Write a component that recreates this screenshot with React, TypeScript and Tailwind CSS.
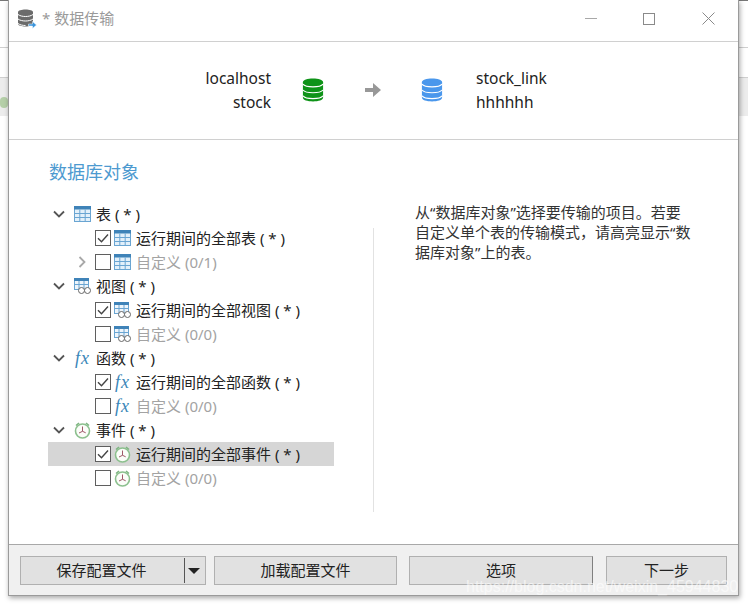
import type { ReactNode } from "react";

const font = "font-['Noto_Sans','Noto_Sans_CJK_SC',sans-serif]";

function Db({ color, className = "" }: { color: string; className?: string }) {
  return (
    <svg viewBox="0 0 24 26" className={className}>
      <path d="M1 4.500C1 2 6 .5 12 .5S23 2 23 4.500v17c0 2.500-5 4-11 4s-11-1.500-11-4z" fill={color} />
      <path d="M1 6.500c2 2.500 7 3 11 3s9-.5 11-3M1 13c2 2.500 7 3 11 3s9-.5 11-3M1 19.500c2 2.500 7 3 11 3s9-.5 11-3" fill="none" stroke="#fff" strokeWidth="1.300" />
    </svg>
  );
}

function TableIcon() {
  return (
    <svg viewBox="0 0 17 16" className="h-4 w-[17px] shrink-0">
      <rect x="0.500" y="0.500" width="16" height="15" fill="#e3f0fa" stroke="#6aa5d2" />
      <rect x="0" y="0" width="17" height="3.500" fill="#3f83b8" />
      <path d="M5.800 3.500v12M11.200 3.500v12M.5 7.500h16M.5 11.500h16" stroke="#6aa5d2" fill="none" />
    </svg>
  );
}

function ViewIcon() {
  return (
    <svg viewBox="0 0 17 16" className="h-4 w-[17px] shrink-0">
      <rect x="0.500" y="0.500" width="14" height="11" fill="#eef5fb" stroke="#6aa5d2" />
      <rect x="0" y="0" width="15" height="3" fill="#3f83b8" />
      <path d="M5 3v8M10 3v8M.5 6.500h14" stroke="#6aa5d2" fill="none" />
      <circle cx="7.500" cy="12.500" r="3" fill="#fff" stroke="#666" />
      <circle cx="13.500" cy="12.500" r="3" fill="#fff" stroke="#666" />
    </svg>
  );
}

function FxIcon() {
  return (
    <span className="flex h-4 w-[17px] shrink-0 items-center justify-center font-['Liberation_Serif',serif] text-[18px] italic leading-none tracking-[1px] text-[#3a86b8]">
      fx
    </span>
  );
}

function ClockIcon() {
  return (
    <svg viewBox="0 0 17 17" className="h-[17px] w-[17px] shrink-0">
      <circle cx="8.500" cy="9" r="7" fill="#fbfdf9" stroke="#8cc08e" strokeWidth="1.600" />
      <path d="M2 3.500 5 1M15 3.500 12 1" stroke="#7db580" strokeWidth="1.600" fill="none" />
      <path d="M8.500 4.500v4.800L5 11M8.500 9.300l3.200 1.500" stroke="#a0586a" fill="none" />
    </svg>
  );
}

function Chevron({ open, muted }: { open?: boolean; muted?: boolean }) {
  return (
    <svg viewBox="0 0 12 12" className="h-3 w-3">
      <path
        d={open ? "M1 3.500 6 8.500l5-5" : "M3.500 1 8.500 6l-5 5"}
        fill="none"
        stroke={muted ? "#a8a8a8" : "#555"}
        strokeWidth="1.800"
      />
    </svg>
  );
}

function Checkbox({ checked }: { checked?: boolean }) {
  return (
    <span className="flex h-4 w-4 shrink-0 items-center justify-center border border-[#5f5f5f] bg-white">
      {checked && (
        <svg viewBox="0 0 14 14" className="h-3.5 w-3.5">
          <path d="M2 7.200 5.500 10.800 12 3.500" fill="none" stroke="#444" strokeWidth="1.400" />
        </svg>
      )}
    </span>
  );
}

function GroupRow({ icon, label }: { icon: ReactNode; label: string }) {
  return (
    <div className="flex h-6 items-center pl-[5px] text-[#222]">
      <span className="mr-[9px] flex w-3"><Chevron open /></span>
      {icon}
      <span className="ml-[5px] whitespace-pre">{label} ( * )</span>
    </div>
  );
}

function ChildRow({
  icon,
  label,
  checked,
  selected,
  expander,
}: {
  icon: ReactNode;
  label: string;
  checked?: boolean;
  selected?: boolean;
  expander?: boolean;
}) {
  return (
    <div className={`flex h-6 w-[286px] items-center pl-[28px] ${selected ? "bg-[#d6d6d6]" : ""}`}>
      <span className="mr-[7px] flex w-3">{expander && <Chevron muted />}</span>
      <Checkbox checked={checked} />
      <span className="ml-[3px] flex">{icon}</span>
      <span className={`ml-[5px] whitespace-pre ${checked ? "text-[#222]" : "text-[#a3a3a3]"}`}>{label}</span>
    </div>
  );
}

function FootButton({ className, children }: { className: string; children: ReactNode }) {
  return (
    <div className={`flex h-[29px] items-center justify-center border border-[#b0b0b0] bg-[#e1e1e1] text-[15px] text-[#222] ${className}`}>
      {children}
    </div>
  );
}

const groups = [
  { name: "表", Icon: TableIcon, all: "运行期间的全部表 ( * )", custom: "自定义 (0/1)", expander: true },
  { name: "视图", Icon: ViewIcon, all: "运行期间的全部视图 ( * )", custom: "自定义 (0/0)" },
  { name: "函数", Icon: FxIcon, all: "运行期间的全部函数 ( * )", custom: "自定义 (0/0)" },
  { name: "事件", Icon: ClockIcon, all: "运行期间的全部事件 ( * )", custom: "自定义 (0/0)", selected: true },
];

export default function App() {
  return (
    <div className={`relative h-[605px] w-[748px] overflow-hidden bg-white ${font}`}>
      {/* bits of the window behind the dialog */}
      <div className="absolute inset-x-0 top-0 h-px bg-[#777]" />
      <div className="absolute inset-x-0 top-[47px] h-[31px] border-y border-[#cfcfcf]" />
      <div className="absolute inset-x-0 top-[78px] h-[38px] bg-[#ececec]" />
      <div className="absolute left-0 top-[97px] h-[11px] w-2 rounded-full bg-[#b5cfa8]" />

      <div className="relative ml-2 flex h-[596px] w-[731px] flex-col border border-t-0 border-[#9a9a9a] bg-white shadow-[1px_2px_5px_rgba(0,0,0,0.35)]">
        <div className="flex h-[42px] shrink-0 items-center border-b border-[#d0d0d0] pb-[4px] pl-[8px]">
          <svg viewBox="0 0 20 20" className="h-5 w-5 shrink-0">
            <path d="M1 3c0-1.500 3.500-2.500 7.500-2.500S16 1.500 16 3v12c0 1.500-3.500 2.500-7.500 2.500S1 16.500 1 15z" fill="#6b6b6b" />
            <path d="M1 5.500c2 1.500 5 2 7.500 2s5.500-.5 7.500-2M1 10c2 1.500 5 2 7.500 2s5.500-.5 7.500-2M1 14.500c2 1.500 5 2 7.500 2" fill="none" stroke="#fff" />
            <path d="M11.500 15h4v-2.500l4 3.500-4 3.500V17h-4z" fill="#3b95dc" stroke="#fff" strokeWidth=".5" />
          </svg>
          <span className="ml-[5px] text-[15px] text-[#9a9a9a]">* 数据传输</span>
          <div className="ml-auto flex items-center pr-[23px]">
            <span className="h-px w-3 bg-[#a8a8a8]" />
            <span className="ml-[46px] h-3 w-3 border border-[#8a8a8a]" />
            <svg viewBox="0 0 13 13" className="ml-[47px] h-[13px] w-[13px]">
              <path d="M.5.5l12 12M12.500.5l-12 12" stroke="#8a8a8a" fill="none" />
            </svg>
          </div>
        </div>

        <div className="flex h-[98px] shrink-0 items-center border-b border-[#d0d0d0] pb-[2px] pl-[196px] text-[15.5px] leading-6 text-[#222]">
          <div className="w-[66px] text-right">
            <div className="whitespace-nowrap">localhost</div>
            <div>stock</div>
          </div>
          <Db color="#0e9318" className="ml-[31px] h-6 w-[22px]" />
          <svg viewBox="0 0 16 14" className="ml-[41px] h-3.5 w-4">
            <path d="M0 5h8V0l8 7-8 7V9H0z" fill="#989898" />
          </svg>
          <Db color="#4a97ec" className="ml-[40px] h-6 w-[22px]" />
          <div className="ml-[33px]">
            <div>stock_link</div>
            <div>hhhhhh</div>
          </div>
        </div>

        <div className="flex min-h-0 flex-1 flex-col pl-[40px]">
          <div className="mt-[19px] text-[18px] leading-[26px] text-[#4d9ad0]">数据库对象</div>
          <div className="mt-[17px] flex items-start text-[15px] leading-6">
            <div className="w-[325px] shrink-0 -ml-px">
              {groups.map((g) => (
                <div key={g.name}>
                  <GroupRow icon={<g.Icon />} label={g.name} />
                  <ChildRow icon={<g.Icon />} label={g.all} checked selected={g.selected} />
                  <ChildRow icon={<g.Icon />} label={g.custom} expander={g.expander} />
                </div>
              ))}
            </div>
            <div className="mt-[26px] h-[284px] w-px shrink-0 bg-[#e2e2e2]" />
            <div className="ml-[41px] mt-0 w-[280px] text-[15px] leading-5 text-[#333]">
              从“数据库对象”选择要传输的项目。若要自定义单个表的传输模式，请高亮显示“数据库对象”上的表。
            </div>
          </div>
        </div>

        <div className="flex h-[51px] shrink-0 items-start border-t border-[#a8a8a8] bg-[#f0f0f0] pl-[11px] pt-[11px]">
          <FootButton className="relative w-[186px] pr-[23px]">
            保存配置文件
            <span className="absolute right-[20px] top-[1px] h-[25px] w-px bg-[#555]" />
            <span className="absolute right-[5px] top-[11px] h-0 w-0 border-x-[6px] border-t-[6px] border-x-transparent border-t-[#222]" />
          </FootButton>
          <FootButton className="ml-2 w-[183px]">加载配置文件</FootButton>
          <FootButton className="ml-3 w-[184px] border-r-[#808080]">选项</FootButton>
          <FootButton className="ml-[13px] w-[121px]">下一步</FootButton>
        </div>
      </div>

      <div className="absolute left-[466px] top-[579px] whitespace-nowrap font-['Liberation_Sans',sans-serif] text-[16px] leading-4 text-white/60">
        https://blog.csdn.net/weixin_45944830
      </div>
    </div>
  );
}
